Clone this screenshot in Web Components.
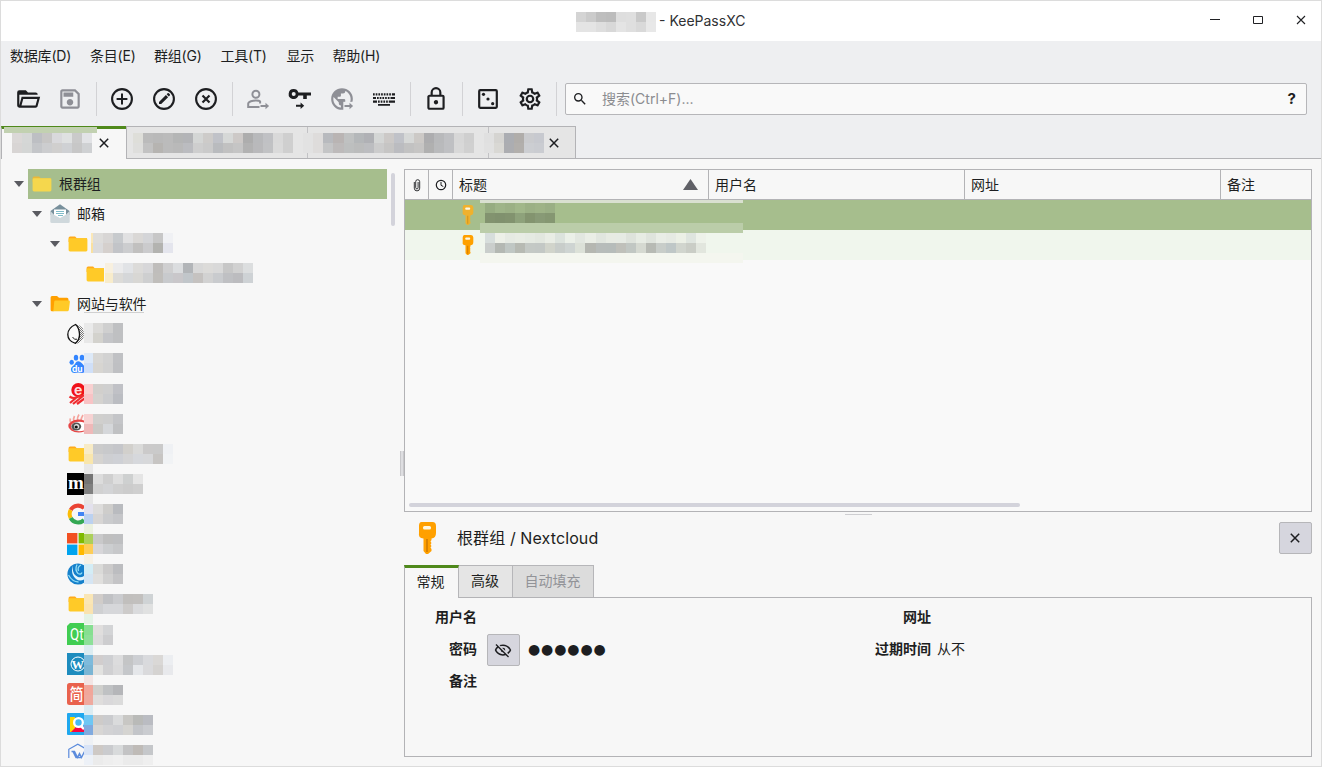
<!DOCTYPE html>
<html lang="zh-CN">
<head>
<meta charset="utf-8">
<title>KeePassXC</title>
<style>
html,body{margin:0;height:100%;overflow:hidden}
body{font:14px/20px Inter,"Noto Sans CJK SC",sans-serif;color:#1d1e21;background:#f7f7f7}
</style>
</head>
<body>
<app-window></app-window>
<script>
const arrow = '<path d="M15.5 19h5v-2.2l3.6 3.2-3.6 3.2V21h-5z"/>';
const folder = (a, b) => `<path fill="${a}" d="M1.6 5q0-1.5 1.5-1.5h5l1.7 1.7H20V9H1.6z"/><rect x="1.6" y="5.3" width="18.8" height="13.2" rx="1.4" fill="${b}"/>`;
const key = (a, b) => `<path fill="${a}" d="M3.5 0h11Q18 0 18 4v7q0 5-4.500 5.500V18l-1 1.500 1 1.500-1 1.500 1 1.500-1 1.500 1 1.500V29L10 32H8l-2.500-3V16.500Q0 16 1 11V4Q1 0 3.500 0z"/><rect x="5" y="4" width="8" height="3.500" rx="1.500" fill="#fff8e0"/><path fill="${b}" d="M8 17h2v13H8z"/>`;
const box26 = '0 0 26 26', box24 = '0 0 24 24', box22 = '0 0 22 22';
const ICONS = {
  open: [box24, '<path d="M6.100,10L4,18V8H21A2,2 0 0,0 19,6H12L10,4H4A2,2 0 0,0 2,6V18A2,2 0 0,0 4,20H19C19.900,20 20.700,19.400 20.900,18.500L23.200,10H6.100M19,18H6L7.600,12H20.600L19,18Z"/>'],
  save: [box24, '<path d="M17 3H5C3.890 3 3 3.900 3 5V19C3 20.100 3.890 21 5 21H19C20.100 21 21 20.100 21 19V7L17 3M19 19H5V5H16.170L19 7.830V19M12 12C10.340 12 9 13.340 9 15S10.340 18 12 18 15 16.660 15 15 13.660 12 12 12M6 6H15V10H6V6Z"/>'],
  add: [box26, '<circle cx="13" cy="13" r="9.900" fill="none" stroke="currentColor" stroke-width="2.100"/><path d="M12 7.600h2V12h4.400v2H14v4.400h-2V14H7.600v-2H12z"/>'],
  edit: [box26, '<circle cx="13" cy="13" r="9.900" fill="none" stroke="currentColor" stroke-width="2.100"/><path d="M8 15.900l6.900-6.900 2.200 2.200-6.900 6.900H8zM15.600 8.300l1-1q.6-.5 1.200 0l1 1q.5.6 0 1.200l-1 1z"/>'],
  remove: [box26, '<circle cx="13" cy="13" r="9.900" fill="none" stroke="currentColor" stroke-width="2.100"/><path fill="none" stroke="currentColor" stroke-width="2.200" d="M9.500 9.500l7 7m0-7l-7 7"/>'],
  user: [box26, '<circle cx="10.900" cy="8.300" r="3.500" fill="none" stroke="currentColor" stroke-width="2"/><path fill="none" stroke="currentColor" stroke-width="2" d="M14.500 21H3.200v-3.200c0-2.500 4.700-3.300 7.900-3.300 1.800 0 3.500.3 4 .9v2"/>' + arrow],
  pass: [box26, '<path fill-rule="evenodd" d="M6.700 3a5 5 0 1 0 4.700 6.600h4.800v3.500h3.600V9.600H24V6.400H11.400A5 5 0 0 0 6.700 3m0 3a2 2 0 1 1 0 4 2 2 0 0 1 0-4"/><path d="M9 18.800h4.600V16.500l3.600 3.300-3.600 3.300v-2.300H9z"/>'],
  url: [box26, '<path transform="scale(1.083)" d="M17.900,17.390C17.640,16.590 16.890,16 16,16H15V13A1,1 0 0,0 14,12H8V10H10A1,1 0 0,0 11,9V7H13A2,2 0 0,0 15,5V4.590C17.930,5.770 20,8.640 20,12C20,14.080 19.200,15.970 17.900,17.390M11,19.930C7.050,19.440 4,16.080 4,12C4,11.380 4.080,10.780 4.210,10.210L9,15V16A2,2 0 0,0 11,18M12,2A10,10 0 0,0 2,12A10,10 0 0,0 12,22A10,10 0 0,0 22,12A10,10 0 0,0 12,2Z"/><path fill="#eeeff1" d="M14.300 15.800H26V26H14.300z"/>' + arrow],
  keyboard: [box26, '<path d="M2 7.200h1.700v2.200H2zM4.700 7.200h1.700v2.200H4.700zM7.400 7.200h1.700v2.200H7.400zM10.100 7.200h1.700v2.200h-1.700zM12.800 7.200h1.700v2.200h-1.700zM15.500 7.200h1.700v2.200h-1.700zM18.200 7.200h1.700v2.200h-1.700zM20.900 7.200H24v2.200h-3.100zM2 10.900h3v2.200H2zM6 10.900h1.700v2.200H6zM8.700 10.900h1.700v2.200H8.700zM11.400 10.900h1.700v2.200h-1.700zM14.100 10.900h1.700v2.200h-1.700zM16.800 10.900h1.700v2.200h-1.700zM19.500 10.900H24v2.200h-4.500zM2 14.500h4v2.200H2zM7 14.500h1.700v2.200H7zM9.700 14.500h1.700v2.200H9.700zM12.400 14.500h1.700v2.200h-1.700zM15.100 14.500h1.700v2.200h-1.700zM17.800 14.500H24v2.200h-6.200zM7 17.900h12v1.900H7z"/>'],
  lock: [box24, '<path d="M12,17C10.890,17 10,16.100 10,15C10,13.890 10.890,13 12,13A2,2 0 0,1 14,15A2,2 0 0,1 12,17M18,20V10H6V20H18M18,8A2,2 0 0,1 20,10V20A2,2 0 0,1 18,22H6C4.890,22 4,21.100 4,20V10C4,8.890 4.890,8 6,8H7V6A5,5 0 0,1 12,1A5,5 0 0,1 17,6V8H18M12,3A3,3 0 0,0 9,6V8H15V6A3,3 0 0,0 12,3Z"/>'],
  dice: [box26, '<rect x="4.200" y="4.200" width="17.600" height="17.600" rx="1" fill="none" stroke="currentColor" stroke-width="2.200"/><circle cx="8.500" cy="8.300" r="1.600"/><circle cx="13" cy="13" r="1.600"/><circle cx="17.700" cy="17.700" r="1.600"/>'],
  cog: [box24, '<path d="M12,8A4,4 0 0,1 16,12A4,4 0 0,1 12,16A4,4 0 0,1 8,12A4,4 0 0,1 12,8M12,10A2,2 0 0,0 10,12A2,2 0 0,0 12,14A2,2 0 0,0 14,12A2,2 0 0,0 12,10M10,22C9.750,22 9.540,21.820 9.500,21.580L9.130,18.930C8.500,18.680 7.960,18.340 7.440,17.940L4.950,18.950C4.730,19.030 4.460,18.950 4.340,18.730L2.340,15.270C2.210,15.050 2.270,14.780 2.460,14.630L4.570,12.970L4.500,12L4.570,11L2.460,9.370C2.270,9.220 2.210,8.950 2.340,8.730L4.340,5.270C4.460,5.050 4.730,4.960 4.950,5.050L7.440,6.050C7.960,5.660 8.500,5.320 9.130,5.070L9.500,2.420C9.540,2.180 9.750,2 10,2H14C14.250,2 14.460,2.180 14.500,2.420L14.870,5.070C15.500,5.320 16.040,5.660 16.560,6.050L19.050,5.050C19.270,4.960 19.540,5.050 19.660,5.270L21.660,8.730C21.790,8.950 21.730,9.220 21.540,9.370L19.430,11L19.500,12L19.430,13L21.540,14.630C21.730,14.780 21.790,15.050 21.660,15.270L19.660,18.730C19.540,18.950 19.270,19.040 19.050,18.950L16.560,17.950C16.040,18.340 15.500,18.680 14.870,18.930L14.500,21.580C14.460,21.820 14.250,22 14,22H10M11.250,4L10.880,6.610C9.680,6.860 8.620,7.500 7.850,8.390L5.440,7.350L4.690,8.650L6.800,10.200C6.400,11.370 6.400,12.640 6.800,13.800L4.680,15.360L5.430,16.660L7.860,15.620C8.630,16.500 9.680,17.140 10.870,17.380L11.240,20H12.760L13.130,17.390C14.320,17.140 15.370,16.500 16.140,15.620L18.570,16.660L19.320,15.360L17.200,13.810C17.600,12.640 17.600,11.370 17.200,10.200L19.310,8.650L18.560,7.350L16.150,8.390C15.380,7.500 14.320,6.860 13.120,6.620L12.750,4H11.250Z"/>'],
  search: [box24, '<path d="M9.500,3A6.500,6.500 0 0,1 16,9.500C16,11.110 15.410,12.590 14.440,13.730L14.710,14H15.500L20.500,19L19,20.500L14,15.500V14.710L13.730,14.440C12.590,15.410 11.110,16 9.500,16A6.500,6.500 0 0,1 3,9.500A6.500,6.500 0 0,1 9.500,3M9.500,5C7,5 5,7 5,9.500C5,12 7,14 9.500,14C12,14 14,12 14,9.500C14,7 12,5 9.500,5Z"/>'],
  hidden: [box24, '<path d="M2,5.270L3.280,4L20,20.720L18.730,22L15.650,18.920C14.500,19.300 13.280,19.500 12,19.500C7,19.500 2.730,16.390 1,12C1.690,10.240 2.790,8.690 4.190,7.460L2,5.270M12,9A3,3 0 0,1 15,12C15,12.350 14.940,12.690 14.830,13L11,9.170C11.310,9.060 11.650,9 12,9M12,4.500C17,4.500 21.270,7.610 23,12C22.180,14.080 20.790,15.880 19,17.190L17.580,15.760C18.940,14.820 20.060,13.540 20.820,12C19.170,8.640 15.760,6.500 12,6.500C10.910,6.500 9.840,6.680 8.840,7L7.300,5.470C8.740,4.850 10.330,4.500 12,4.500M3.180,12C4.830,15.360 8.240,17.500 12,17.500C12.690,17.500 13.370,17.430 14,17.290L11.720,15C10.290,14.850 9.150,13.710 9,12.280L5.600,8.870C4.610,9.720 3.780,10.780 3.180,12Z"/>'],
  cross: ['0 0 12 12', '<path fill="none" stroke="currentColor" stroke-width="1.500" d="M1.800 1.800l8.400 8.400m0-8.400l-8.400 8.400"/>'],
  thincross: ['0 0 12 12', '<path fill="none" stroke="currentColor" stroke-width="1.100" d="M2 2l8 8m0-8l-8 8"/>'],
  min: ['0 0 12 12', '<path d="M1 5h10v1H1z"/>'],
  max: ['0 0 12 12', '<path fill="none" stroke="currentColor" d="M1.500 2.500h9v7h-9z"/>'],
  clip: ['0 0 12 14', '<path fill="none" stroke="currentColor" stroke-width=".9" d="M3.300 4v6.200a2.700 2.700 0 0 0 5.400 0V3.700a2 2 0 0 0-4 0V9.700a1.200 1.200 0 0 0 2.400 0V4"/>'],
  clock: ['0 0 12 12', '<circle cx="6" cy="6" r="4.700" fill="none" stroke="currentColor" stroke-width="1.200"/><path fill="none" stroke="currentColor" d="M6 3v3.300l2.300 1.200"/>'],
  down: ['0 0 10 6', '<path fill="#5a5b61" d="M0 0h10L5 6z"/>'],
  sort: ['0 0 15 11', '<path fill="#606167" d="M0 11h15L7.500 0z"/>'],
  key: ['0 0 19 32', key('#ffa000', '#d98200')],
  keysel: ['0 0 19 32', key('#efb12e', '#d59a22')],
  folder: [box22, folder('#ffa91a', '#ffca28')],
  foldersel: [box22, folder('#e9b838', '#f5d74d')],
  folderopen: [box22, '<path fill="#ffa000" d="M1.600 4.500Q1.600 3 3 3h5l2 1.800h8q1.500 0 1.500 2V15L4 18.300H3q-1.400 0-1.400-1.500z"/><path fill="#ffca28" d="M6.500 7.500h13.200q1.300 0 1.200 1.300l-1 8q-.3 1.500-1.600 1.500H3.300q1 0 1.200-1.500l.7-8q.2-1.300 1.300-1.300z"/>'],
  mail: [box22, '<path fill="#78909c" d="M1.500 8L11 1.200 20.500 8v4h-19z"/><path fill="#fff" d="M5 6.500h12v7L11 17l-6-3.500z"/><path stroke="#80bcc8" d="M7 8.500h8M7 10.500h8M9 12.500h5"/><path fill="#cfd8dc" d="M1.300 8l4 4L11 15l5.500-3 4.200-4v10.500q0 1.500-1.500 1.500H2.800q-1.500 0-1.500-1.500z"/>'],
  moon: [box22, '<defs><pattern id="p" width="2" height="2" patternUnits="userSpaceOnUse"><path fill="#777" d="M0 0h1v1H0zM1 1h1v1H1z"/></pattern></defs><path fill="url(#p)" d="M9 1q8 2 8 10 0 8-9 10 6-6 4-10 0-7-3-10z"/><path fill="#fafafa" stroke="#111" stroke-width="1.300" d="M8.500 1.500C3 4 .8 7 .8 11.500S4 19 8.500 20.300C12 17 12.700 14 12.500 11S11.500 4 8.500 1.500z"/><path stroke="#222" fill="none" d="M5.500 14q2 3.500 4.500 2.200"/>'],
  baidu: [box22, '<g fill="#3385ff"><ellipse cx="4.700" cy="9.300" rx="2.200" ry="2.500"/><ellipse cx="9" cy="4.700" rx="2.200" ry="2.900"/><ellipse cx="15" cy="4.700" rx="2.300" ry="2.900"/><path d="M11.500 8.300c2.500 0 4 3 6.500 5.500v4.500q-1 2-4 1.500-2.500-.5-5 0-4.500.7-5-2.800c-.4-3 1.800-3.500 3.300-5.200S9 8.300 11.500 8.300z"/></g><text x="5" y="18.500" font-size="8.500" font-weight="700" font-family="Inter" fill="#fff">du</text>'],
  epic: [box22, '<circle cx="11.300" cy="7" r="7" fill="#f01219"/><text x="7" y="11.500" font-size="14" font-weight="700" font-family="Inter" fill="#fdd">e</text><path fill="none" stroke="#f02a2e" stroke-width="2.200" d="M2.500 13.500q4 3 9 0l6-1M3 20l7-6m-4 7l10-8m-6 8l8-6"/>'],
  weibo: [box22, '<path fill="none" stroke="#f5a39c" stroke-width="1.700" d="M3.500 9.500q-1-2 0-4M7 8q-1-2 .5-5M10.500 7.500q-.5-3 1.500-6M14 8q0-3 2-6"/><ellipse cx="11.500" cy="13" rx="10.200" ry="6.500" fill="#e64545"/><ellipse cx="12.500" cy="13.500" rx="8.500" ry="4.800" fill="#fff"/><ellipse cx="9.300" cy="13.500" rx="4.900" ry="4" fill="#555"/><circle cx="9.600" cy="13.500" r="2.600" fill="#ddd"/><circle cx="9.200" cy="14" r="1.600" fill="#111"/>'],
  m: [box22, '<path fill="#000" d="M0 0h22v22H0z"/><text x="1" y="16" font-size="19" font-weight="700" font-family="Liberation Serif" fill="#fff">m</text>'],
  google: [box22, '<g fill="none" stroke-width="4"><path stroke="#ea4335" d="M3.700 7A8.300 8.300 0 0 1 17 5.200"/><path stroke="#fbbc05" d="M3.700 7a8.300 8.300 0 0 0 0 8"/><path stroke="#34a853" d="M3.700 15a8.300 8.300 0 0 0 13.300 2"/><path stroke="#4285f4" d="M11 11h9"/></g>'],
  ms: [box22, '<path fill="#f25022" d="M0 0h10.400v10.400H0z"/><path fill="#7fba00" d="M11.600 0H22v10.400H11.600z"/><path fill="#00a4ef" d="M0 11.600h10.400V22H0z"/><path fill="#ffb900" d="M11.600 11.600H22V22H11.600z"/>'],
  deepin: [box22, '<circle cx="11" cy="11" r="10.600" fill="#1580cb"/><path fill="#e4f6fd" d="M6 2q-1.500 9 5 12 5 1 8-3l-1 5q-5 3-9 0Q3 11 6 2z"/><path fill="none" stroke="#8fdcf5" stroke-width="1.300" d="M10 1.500Q7.500 7 11 10.500q3 1.500 4-1M14 2q-4 2-2.500 6M1.500 12q4 7 10 7"/>'],
  qt: [box22, '<path fill="#41cd52" d="M3 0h19v19l-3 3H0V3z"/><text x="3" y="17" font-size="17" font-family="Roboto" fill="#fff" textLength="13.500" lengthAdjust="spacingAndGlyphs">Qt</text>'],
  wp: [box22, '<path fill="#1e8cbe" d="M0 0h22v22H0z"/><circle cx="11" cy="11" r="7" fill="none" stroke="#fff"/><text x="4.500" y="15.500" font-size="12.500" font-weight="700" font-family="Liberation Serif" fill="#fff">W</text>'],
  jian: [box22, '<rect width="22" height="22" rx="2.500" fill="#e9624d"/><text x="2.500" y="17" font-size="16" font-weight="500" font-family="Noto Sans CJK SC" fill="#fff" textLength="14" lengthAdjust="spacingAndGlyphs">简</text>'],
  lens: [box22, '<rect width="22" height="22" rx="1" fill="#1fa8ee"/><path fill="#ffd600" d="M3 4h5v15H3z"/><path fill="#f8063f" d="M4 19l5-5h8v5z"/><circle cx="11.500" cy="9.500" r="5.500" fill="#fff"/><circle cx="11.500" cy="9.500" r="3.200" fill="#43b9f2"/><path stroke="#fff" stroke-width="2.500" d="M14 13l3 3"/>'],
  hex: [box22, '<path fill="none" stroke="#5b8bdc" stroke-width="1.200" d="M1.800 15V6.300l9-5 9 5V16"/><path fill="none" stroke="#5b8bdc" stroke-width="1.400" d="M4.500 8.500h3l3 6 2-4 2 4 3-6M6 8.500l3 6h5"/>']
};

class BaseElement extends HTMLElement {
  connectedCallback() {
    if (this.shadowRoot) return;
    this.attachShadow({mode: 'open'}).innerHTML = `<style>:host,*{box-sizing:border-box}${this.css()}</style>${this.html()}`;
  }
  css() { return ':host{display:block}'; }
  html() { return '<slot></slot>'; }
  at(name, fallback = '') { return this.getAttribute(name) ?? fallback; }
}

customElements.define('app-icon', class extends BaseElement {
  css() { return `:host{display:block;flex:none;width:${this.at('w')}px;height:${this.at('h', this.at('w'))}px;overflow:hidden}svg{display:block;fill:currentColor}`; }
  html() {
    const [box, art] = ICONS[this.at('name')];
    return `<svg viewBox="${box}" width="${this.at('full', this.at('w'))}" height="${this.at('full', this.at('h', this.at('w')))}">${art}</svg>`;
  }
});

/* Redaction tiles: rows split by "/", tokens are two-digit greys, six-digit colours or "-" for none. */
customElements.define('pixel-mosaic', class extends BaseElement {
  css() { return ':host{display:block;flex:none}svg{display:block;overflow:visible}'; }
  html() {
    const rows = this.at('cells').split('/').map(r => r.trim().split(/\s+/));
    const first = +this.at('first', 10), step = +this.at('step', 10);
    let out = '';
    rows.forEach((row, y) => row.forEach((c, x) => {
      if (c === '-') return;
      const x0 = x ? Math.round(first + (x - 1) * step) : 0, x1 = Math.round(first + x * step);
      out += `<rect x="${x0}" y="${y * 10}" width="${x1 - x0}" height="10" fill="#${c.length === 2 ? c + c + c : c}"/>`;
    }));
    const w = first + (Math.max(...rows.map(r => r.length)) - 1) * step;
    return `<svg width="${w}" height="20" shape-rendering="crispEdges">${out}</svg>`;
  }
});

customElements.define('title-bar', class extends BaseElement {
  css() { return `:host{display:flex;height:40px;background:#fff;align-items:center;justify-content:center;position:relative;flex:none}
    .t{display:flex;align-items:center;gap:3px;width:170px;white-space:nowrap;color:#303134}
    .t pixel-mosaic{margin-top:2px}
    .b{position:absolute;right:14px;top:13px;display:flex;gap:31px;color:#202124}`; }
  html() { return `<div class="t"><pixel-mosaic cells="d4 cb be bc de df c9 e7/e4 e4 de d8 e4 df d9 e8"></pixel-mosaic><span>- KeePassXC</span></div>
    <div class="b"><app-icon name="min" w="12"></app-icon><app-icon name="max" w="12"></app-icon><app-icon name="thincross" w="12"></app-icon></div>`; }
});

customElements.define('menu-bar', class extends BaseElement {
  css() { return `:host{display:flex;flex:none;height:35px;padding:5px 0 0 9px;letter-spacing:-.2px}span{white-space:nowrap}`; }
  html() { return [['数据库(D)',80],['条目(E)',64],['群组(G)',66.5],['工具(T)',66],['显示',46],['帮助(H)',60]].map(([t,w]) => `<span style="width:${w}px">${t}</span>`).join(''); }
});

customElements.define('tool-button', class extends BaseElement {
  css() { return ':host{display:flex;width:42px;height:46px;align-items:center;justify-content:center;flex:none}:host([off]){color:#8e8f96}'; }
  html() { return `<app-icon name="${this.at('icon')}" w="26"></app-icon>`; }
});

customElements.define('search-field', class extends BaseElement {
  css() { return `:host{display:flex;flex:1;height:32px;border:1px solid #b6b6b9;border-radius:2px;background:#f9f9f9;align-items:center;margin:0 14px 0 4px;padding:0 10px 0 6px}
    span{flex:1;margin-left:14px;color:#8b8c90}b{font-size:15px}`; }
  html() { return '<app-icon name="search" w="16"></app-icon><span>搜索(Ctrl+F)...</span><b>?</b>'; }
});

customElements.define('tool-bar', class extends BaseElement {
  css() { return `:host{display:flex;flex:none;height:50px;align-items:center;padding:0 0 4px 6px}i{width:10px;height:34px;flex:none;display:flex;justify-content:center}i::before{content:"";width:1px;background:#d2d2d5}`; }
  html() { return `<tool-button icon="open"></tool-button><tool-button icon="save" off></tool-button><i></i>
    <tool-button icon="add"></tool-button><tool-button icon="edit"></tool-button><tool-button icon="remove"></tool-button><i></i>
    <tool-button icon="user" off></tool-button><tool-button icon="pass"></tool-button><tool-button icon="url" off></tool-button><tool-button icon="keyboard"></tool-button><i></i>
    <tool-button icon="lock"></tool-button><i></i><tool-button icon="dice"></tool-button><tool-button icon="cog"></tool-button><i></i><search-field></search-field>`; }
});

customElements.define('database-tabs', class extends BaseElement {
  css() { return `:host{display:flex;flex:none;height:33px;border-bottom:1px solid #b3b3b6;position:relative}
    .a{width:125px;height:33px;background:#f7f7f7;border-top:3px solid #4f891b;border-left:1px solid #b3b3b6;display:flex;align-items:center;padding:0 0 2px 10px;gap:6px}
    .r{display:flex;width:450px;border:1px solid #b3b3b6;border-bottom:0;background:#e5e5e5;align-items:center;padding-left:6px;gap:4px;position:relative}
    .r::before{content:"";position:absolute;top:0;bottom:0;left:180px;width:1px;background:#c2c2c5}
    .r::after{content:"";position:absolute;top:0;bottom:0;left:361px;width:1px;background:#c2c2c5}
    .s{position:absolute;left:3px;top:1px;width:93px;height:6px;background:#c2d1b1}
    pixel-mosaic{position:relative;z-index:1}app-icon{position:relative}`; }
  html() { return `<div class="a"><pixel-mosaic cells="dbd8d7 d5d7d6 bdbfc3 c7c6c5 d9d9dc dfe1e1 ca e2e3e6/d8d5d4 d4d6d5 c4c6c9 cccdcf d0cfce cfd1d4 c7 cfd1d3"></pixel-mosaic><app-icon name="cross" w="12"></app-icon></div>
    <div class="r"><pixel-mosaic step="10.025" cells="deded9 bb b9 bb b4b5b5 b3b4b7 d4d6d5 cdcbc9 c0c2c8 d6d8d7 cdc9c7 adadad b8b9bb c0c1c4 d9 cf e5 e2 dedcdb b8babe b9b4b3 bfc1c1 b4b7b9 b0b1b5 d4d6d5 ccc9c7 c0c2c8 d6d8d7 ccc9c6 adadaf b8b9bb bfc0c3 d7 cf e5 e0 d5d4d1 abadb2 b0adaa cacbce c7c9cf/dededc c2 b6b4b1 bb b9 bbbcc0 ce ca b9bbbe c1 c5 b2b2b2 b9b9bb c1c2c4 da cf e5 e2 dedcdb c4c5c6 bdbaba bdbfbf bbbcbc bcbdc0 cc c6c5c4 bbbcc0 c2 c6c5c4 b0b0b0 b9babc bfc0c3 d8 d0 e5 e1 d9d8d4 acadb1 b2afac ccced2 caccd1"></pixel-mosaic><app-icon name="cross" w="12"></app-icon></div><div class="s"></div>`; }
});

customElements.define('tree-row', class extends BaseElement {
  css() {
    const depth = +this.at('depth');
    return `:host{display:flex;flex:none;height:30px;align-items:center;padding-left:${12 + depth * 18}px}
    .ar{width:10px;height:6px;flex:none;margin:0 7px 0 1px}
    .body{display:flex;flex:1;height:30px;align-items:center;padding-left:3px;margin-left:-3px}
    :host([selected]) .body{background:#a6be8d;margin-right:9px}
    .label{margin-left:6px;letter-spacing:-.1px;padding-bottom:1px}
    pixel-mosaic{margin-left:${this.at('shift', '0')}px;margin-top:${this.at('drop', '0')}px}`;
  }
  html() {
    const open = this.hasAttribute('open') ? '<app-icon name="down" w="10" h="6"></app-icon>' : '';
    const cells = this.at('cells');
    return `<div class="ar">${open}</div><div class="body"><app-icon name="${this.at('icon')}" w="${this.at('clip', 22)}" h="22" full="22"></app-icon>${cells ? `<pixel-mosaic first="${this.at('first', 9)}" cells="${cells}"></pixel-mosaic>` : '<span class="label"><slot></slot></span>'}</div>`;
  }
});

customElements.define('group-tree', class extends BaseElement {
  css() { return `:host{display:flex;flex-direction:column;width:395px;height:588px;position:relative}
    .sb{position:absolute;left:390px;top:4px;width:4px;height:53px;border-radius:2px;background:#d3d3db}
    .ul{position:absolute;left:83px;top:143px;width:60px;height:1px;background:#d0d0d0}
    tree-row:last-of-type{clip-path:inset(0 0 -8px 0)}`; }
  html() {
    const kids = [
      ['moon','ea dbdad8 cfcfcf bfc0c2/e8 d3d2cd c4c5c8 bfc0c2'],
      ['baidu','dde9f8 d8d7d5 d2 c0c1c4/cfdff8 d7d5d1 d1 bfc0c3'],
      ['epic','f9d0d0 d1cfcc cf c0c1c6/f8c3c5 d4d2cf cbccce bbbdc2'],
      ['weibo','f7d2d2 d0cfcd ce c4c5c8/efb8b8 cac9c6 d5d7da c0c1c3'],
      ['folder','f8ebc5 cb c8c9cb c5c6ca d2d0cc dadad9 cbcaca ca eff1f4/f9e6ac d5d3d0 cecfd2 ced0d5 d4d4d5 d6d8dc d7d8da c7c5c3 f1f3f5/e8'],
      ['m','757575 dc cf dedede ced0d0 e5/808080 d1 d3d4d6 cf cc cf/e6e6e6'],
      ['google','e3e1ed dddcdb cecdcb b9bbbf/bbd1f0 d7d5d4 cacbcd c5c6c9/ebf1df'],
      ['ms','acd05a c9c9ca bf bebfc1/fdcd58 d7d6d9 ccced0 c7c8ca/f7f1e5'],
      ['deepin','d3edf6 dadad8 cbcaca bcbdc0/d5e5f3 e0dfdd d0 c4c4c6'],
      ['folder','fae6b5 d0ccc9 c0c1c4 cacbce c1bfbd c2c0be cfd3d5/fae3b0 cfd0d2 d6d7da d6d7da cdcbca dadbdd e0e1e1/e4f3e6'],
      ['qt','86df91 e0dedd d3d4d6/8de098 dcdbdc cdcdcf/dcecf1'],
      ['wp','7ebbdc d1cdcd cecfd2 dcdcdd c4c5c6 cdcfd3 d9dadd dad8d6 eceef1/7bb5d4 e2e2e0 d0d0d2 dadadb c5c7ca e5e7ea dadadc d5d3d1 e8e9ec/f2e5e4'],
      ['jian','f1a69a cfcfcc bfc1c3 b5b6b9/efa99e dfdddc d9d8da db/dcecf2'],
      ['lens','6fc7f4 cecbc9 cacbce dadbdc c8c7c4 b9bab8 babcc2/80aadf d8d6d4 d2d2d4 cfd0d3 d5d4d1 c3c5c9 caccd0/eef1f5'],
      ['hex','d9e4f6 cec9c5 cacbce d8dadb c3c3c4 bfbbb7 c5c7ca/edf1f7 eb ee f0 eb eb ef'],
    ];
    return `<tree-row depth="0" open selected icon="foldersel">根群组</tree-row><tree-row depth="1" open icon="mail">邮箱</tree-row>
    <tree-row depth="2" open icon="folder" shift="2" drop="-2" first="2" cells="fbe8b8 dedddb d8d6d5 c7cacd e1e1e2 dad8d6 d4d5d8 c7 f0f1f4/fae1a0 dbdbdc d5d0cd c2c4c8 cccdcf c1c0bf cbcbcd b3b3b0 e4e5ed"></tree-row>
    <tree-row depth="3" icon="folder" clip="19" shift="1" drop="-2" first="8" cells="f8f0df ebebec e1e3e6 dcdbd9 d7d7d9 bfbdbb cfcfd0 dbdddf b2b5b8 d8 dcdbd9 d9 c7 d1 dcdedf/f8eccb dcdbd8 d5d7d9 d8d7d4 cecfd0 c0bebb c8cacd c9c7ca c1c6ca c5c2c0 d2 c9cbce bfc0c3 bcbcbf ced2d5"></tree-row>
    <tree-row depth="1" open icon="folderopen">网站与软件</tree-row>` +
    kids.map(([i, c], n) => `<tree-row depth="2" icon="${i}" clip="17" drop="${n < 2 ? -2 : n > 9 ? 2 : 0}" cells="${c}"></tree-row>`).join('') +
    '<div class="sb"></div><div class="ul"></div>';
  }
});

customElements.define('entry-table', class extends BaseElement {
  css() { return `:host{display:block;height:343px;border:1px solid #b3b3b6;background:#f9f9f9;position:relative;flex:none}
    .h{display:flex;height:30px;border-bottom:1px solid #b3b3b6;background:#f7f7f7}
    .h>div{display:flex;align-items:center;border-right:1px solid #b3b3b6;padding:0 10px 0 6px;white-space:nowrap}.h>div:last-child{border:0}
    .h .i{padding:0;justify-content:center}.h span{flex:1}
    .r{height:30px;display:flex;align-items:center;padding-left:57px;background:#f0f6ed}.r.s{background:#a6be8d}
    .o{position:absolute;left:75px;top:30px;width:263px;height:63px}
    .o p{position:absolute;left:0;right:0;margin:0}.o pixel-mosaic{position:absolute;left:5px}
    .sb{position:absolute;left:4px;bottom:4px;width:611px;height:4px;border-radius:2px;background:#d3d3db}`; }
  html() { return `<div class="h"><div class="i" style="width:24px"><app-icon name="clip" w="12" h="14"></app-icon></div><div class="i" style="width:24px"><app-icon name="clock" w="12"></app-icon></div>
    <div style="width:256px"><span>标题</span><app-icon name="sort" w="15" h="11"></app-icon></div><div style="width:256px">用户名</div><div style="width:256px">网址</div><div>备注</div></div>
    <div class="r s"><app-icon name="keysel" w="12" h="20"></app-icon></div><div class="r"><app-icon name="key" w="12" h="20"></app-icon></div>
    <div class="o"><p style="top:0;height:3px;background:#d9e0d0"></p><p style="top:23px;height:10px;background:#bbcda9"></p><p style="top:53px;height:10px;background:#f4f6ef"></p>
    <pixel-mosaic style="top:3px" cells="96ac81 9eb488 9bb085 a1b78a 9bb085 9eb387 9aaf85/82936f 80916e 82936f 8ea27b 83946f 889a76 859772"></pixel-mosaic>
    <pixel-mosaic style="top:33px" step="10.050" cells="d7dedc edf0e8 e6eae3 e8ece4 e5eae2 e2e7df e9ede5 dce3dd ebf0e8 e2e7e0 eaeee6 e1e6df e7ebe3 e6ebe4 dee3dc e7ece4 dfe4dd e9ede6 e6eae3 ecf0e6 dfe5df eef2ea/cacecc b4b8b3 c0c7c4 b7bab3 c4c9c5 c3c8c5 d1d4cb c8cdca ced4d2 dce1d8 b5b7b1 b7bcba b6bcba bfc0ba c1c7c3 d5d9d1 b7bab4 c8cdc9 bfc7c7 d1d5ce cacdc6 e2e6de"></pixel-mosaic></div><div class="sb"></div>`; }
});

customElements.define('entry-preview', class extends BaseElement {
  css() { return `:host{display:block}
    header{display:flex;align-items:center;height:32px;margin-top:10px;font-size:16px;padding-left:14px}
    header span{flex:1;margin-left:20px;letter-spacing:.1px}
    .btn{display:flex;align-items:center;justify-content:center;width:33px;height:32px;border:1px solid #b6b6b9;border-radius:2px;background:#d6d6de}
    header .btn{padding-right:1px}
    nav{display:flex;height:33px;margin-top:11px}
    nav div{height:32px;border:1px solid #b6b6b9;border-left:0;border-bottom:0;background:#e5e5e5;display:flex;align-items:center;justify-content:center;width:54px;padding:0 1px 1px 0}
    nav .on{border-left:1px solid #b3b3b6;border-top:3px solid #4f891b;background:#f7f7f7;height:33px;width:55px;position:relative;padding:0 2px 3px 0}
    nav .on,nav .off{flex:none}nav .off{width:81px;background:#dcdcdc;color:#929398}
    section{border:1px solid #b3b3b6;height:160px;margin-top:-1px;padding-top:4px;display:grid;grid-template:32px 32px 31px/72px 354px 100px 1fr;align-items:center}
    b{text-align:right;padding-bottom:2px}.v{display:flex;align-items:center;padding-left:10px}.d{margin-left:8px;font:14px/20px "DejaVu Sans",sans-serif;letter-spacing:2.220px}
    .v .btn{padding-right:2px}
    .v .d{letter-spacing:.9px;padding-bottom:2px}
    .n{padding:0 0 2px 6px}`; }
  html() { return `<header><app-icon name="key" w="19" h="32"></app-icon><span>根群组 / Nextcloud</span><div class="btn"><app-icon name="cross" w="12"></app-icon></div></header>
    <nav><div class="on">常规</div><div>高级</div><div class="off">自动填充</div></nav>
    <section><b>用户名</b><i></i><b>网址</b><i></i><b>密码</b><div class="v"><div class="btn"><app-icon name="hidden" w="18"></app-icon></div><span class="d">●●●●●●</span></div><b>过期时间</b><span class="n">从不</span><b>备注</b></section>`; }
});

customElements.define('app-window', class extends BaseElement {
  css() { return `:host{display:flex;flex-direction:column;width:1322px;height:767px;border:1px solid #dcdcdc;background:#eeeff1;overflow:hidden}
    main{display:flex;flex:1;min-height:0;background:#f7f7f7;padding-top:10px}
    .g{width:8px;padding:282px 0 0 4px;display:flex;align-items:flex-start}.g::before{content:"";width:4px;height:25px;border:solid #c8c8cb;border-width:0 1px;background:#dedee1}
    .r{width:908px;position:relative}.k{position:absolute;left:441px;top:345px;width:27px;height:1px;background:#ceced1}`; }
  html() { return `<title-bar></title-bar><menu-bar></menu-bar><tool-bar></tool-bar><database-tabs></database-tabs>
    <main><group-tree></group-tree><div class="g"></div><div class="r"><entry-table></entry-table><entry-preview></entry-preview><div class="k"></div></div></main>`; }
});
</script>
</body>
</html>
